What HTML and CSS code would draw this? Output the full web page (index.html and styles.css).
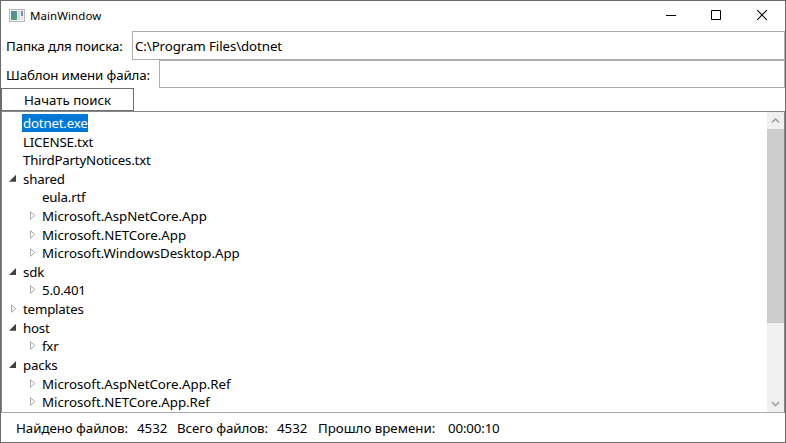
FILE: index.html
```
<!DOCTYPE html>
<html lang="ru">
<head>
<meta charset="utf-8">
<title>MainWindow</title>
<link rel="stylesheet" href="styles.css">
</head>
<body>
<div class="window">
  <header class="titlebar">
    <svg class="app-icon" width="16" height="14" viewBox="0 0 16 14"><defs><linearGradient id="g" x1="0" y1="0" x2="1" y2="1"><stop offset="0" stop-color="#5b86b0"/><stop offset="1" stop-color="#4da06f"/></linearGradient></defs><rect x=".5" y=".5" width="15" height="12" fill="#f4f4f4" stroke="#b5b8ba"/><rect x="2" y="2" width="6" height="9" fill="url(#g)"/><rect x="9" y="2" width="2" height="9" fill="#d5d9dc"/><rect x="12" y="2" width="2" height="5" fill="#6f8fa3"/><rect x="12" y="8" width="2" height="3" fill="#dde0e2"/></svg>
    <span class="title">MainWindow</span>
    <svg class="controls" width="138" height="30" viewBox="0 0 138 30" fill="none" stroke="#000"><path d="M19 14.5H29M64.5 9.5H73.5V18.5H64.5Z"/><path d="M110.2 9.2L119.8 18.8M119.8 9.2L110.2 18.8" stroke-width="1.1"/></svg>
  </header>
  <div class="field field-path"><label>Папка для поиска:</label><div class="box"><span>C:\Program Files\dotnet</span></div></div>
  <div class="field field-mask"><label>Шаблон имени файла:</label><div class="box"></div></div>
  <button class="search"><span>Начать поиск</span></button>
  <main class="tree">
    <ul class="items">
      <li><i></i><span class="selected">dotnet.exe</span></li>
      <li><i></i><span>LICENSE.txt</span></li>
      <li><i></i><span>ThirdPartyNotices.txt</span></li>
      <li><i class="open"></i><span>shared</span></li>
      <li class="child"><i></i><span>eula.rtf</span></li>
      <li class="child"><i class="closed"></i><span class="wide">Microsoft.AspNetCore.App</span></li>
      <li class="child"><i class="closed"></i><span class="wide">Microsoft.NETCore.App</span></li>
      <li class="child"><i class="closed"></i><span class="wide">Microsoft.WindowsDesktop.App</span></li>
      <li><i class="open"></i><span>sdk</span></li>
      <li class="child"><i class="closed"></i><span>5.0.401</span></li>
      <li><i class="closed"></i><span>templates</span></li>
      <li><i class="open"></i><span>host</span></li>
      <li class="child"><i class="closed"></i><span>fxr</span></li>
      <li><i class="open"></i><span>packs</span></li>
      <li class="child"><i class="closed"></i><span class="wide">Microsoft.AspNetCore.App.Ref</span></li>
      <li class="child"><i class="closed"></i><span class="wide">Microsoft.NETCore.App.Ref</span></li>
    </ul>
    <div class="scrollbar">
      <svg width="17" height="17" viewBox="0 0 17 17"><path d="M5 10.5L8.5 7L12 10.5"/></svg>
      <div class="track"><div class="thumb"></div></div>
      <svg width="17" height="17" viewBox="0 0 17 17"><path d="M5 7L8.5 10.5L12 7"/></svg>
    </div>
  </main>
  <footer class="status"><span class="s1">Найдено файлов:</span><span class="s2">4532</span><span class="s3">Всего файлов:</span><span class="s4">4532</span><span class="s5">Прошло времени:</span><span class="s6">00:00:10</span></footer>
</div>
</body>
</html>
```
FILE: styles.css
```
* { box-sizing: border-box; }
body { margin: 0; background: #fff; overflow: hidden; }
.window {
  width: 786px; height: 443px; border: 1px solid #6b6b6b; background: #fff;
  display: flex; flex-direction: column;
  font: 13.3px/18px "Noto Sans", "Open Sans", sans-serif; color: #000; white-space: nowrap;
}
.titlebar { height: 30px; flex: none; display: flex; align-items: center; padding-left: 8px; }
.app-icon { margin-top: -1px; }
.title { font-size: 11.5px; margin-left: 5px; letter-spacing: 0.08px; flex: 1; }
.field { display: flex; flex: none; padding-left: 5px; }
.field label { padding-top: 6px; letter-spacing: -0.12px; }
.field-path { height: 29px; }
.field-mask { height: 28px; }
.field-path label { width: 126px; }
.field-mask label { width: 153px; }
.box { flex: 1; border: 1px solid #abadb3; padding: 5px 2px; }
.box span { letter-spacing: -0.09px; }
.search {
  width: 133px; height: 23px; flex: none; border: 1px solid #707070; background: #fff;
  font: inherit; padding: 0; color: #000;
}
.tree { height: 302px; flex: none; border: 1px solid #828790; border-bottom-color: #a5a8b0; display: flex; overflow: hidden; }
.items { flex: 1; list-style: none; margin: 0; padding: 2px 0 0 2px; overflow: hidden; }
.items li { height: 18.62px; display: flex; align-items: flex-start; }
.items .child { padding-left: 19px; }
.items i { width: 18px; height: 18px; flex: none; }
.items span { height: 18px; line-height: 18px; padding: 0 1px; letter-spacing: -0.2px; }
.items .wide { letter-spacing: -0.03px; }
.items .selected { background: #0078d7; color: #fff; padding-right: 0; }
.open::before, .closed::before { content: ""; display: block; }
.open::before { width: 7px; height: 7px; margin: 5px 0 0 5px; background: #404040; clip-path: polygon(100% 0, 100% 100%, 0 100%); }
.closed::before { width: 6px; height: 9px; margin: 4px 0 0 7px; background: url("data:image/svg+xml,%3Csvg xmlns='http://www.w3.org/2000/svg' width='6' height='9'%3E%3Cpath d='M.5 .8V8.2L4.9 4.5Z' fill='white' stroke='%23aaa'/%3E%3C/svg%3E"); }
.scrollbar { width: 17px; background: #f0f0f0; display: flex; flex-direction: column; }
.scrollbar svg { display: block; fill: none; stroke: #a0a0a0; stroke-width: 1.6; }
.track { flex: 1; }
.thumb { height: 194px; background: #cdcdcd; }
.status { flex: 1; display: flex; align-items: center; padding-left: 15px; }
.status span { flex: none; }
.s1 { width: 121px; letter-spacing: -0.05px; } .s2 { width: 40px; } .s3 { width: 100px; letter-spacing: -0.05px; } .s4 { width: 41px; } .s5 { width: 130px; } .s6 { letter-spacing: -0.15px; }
```
